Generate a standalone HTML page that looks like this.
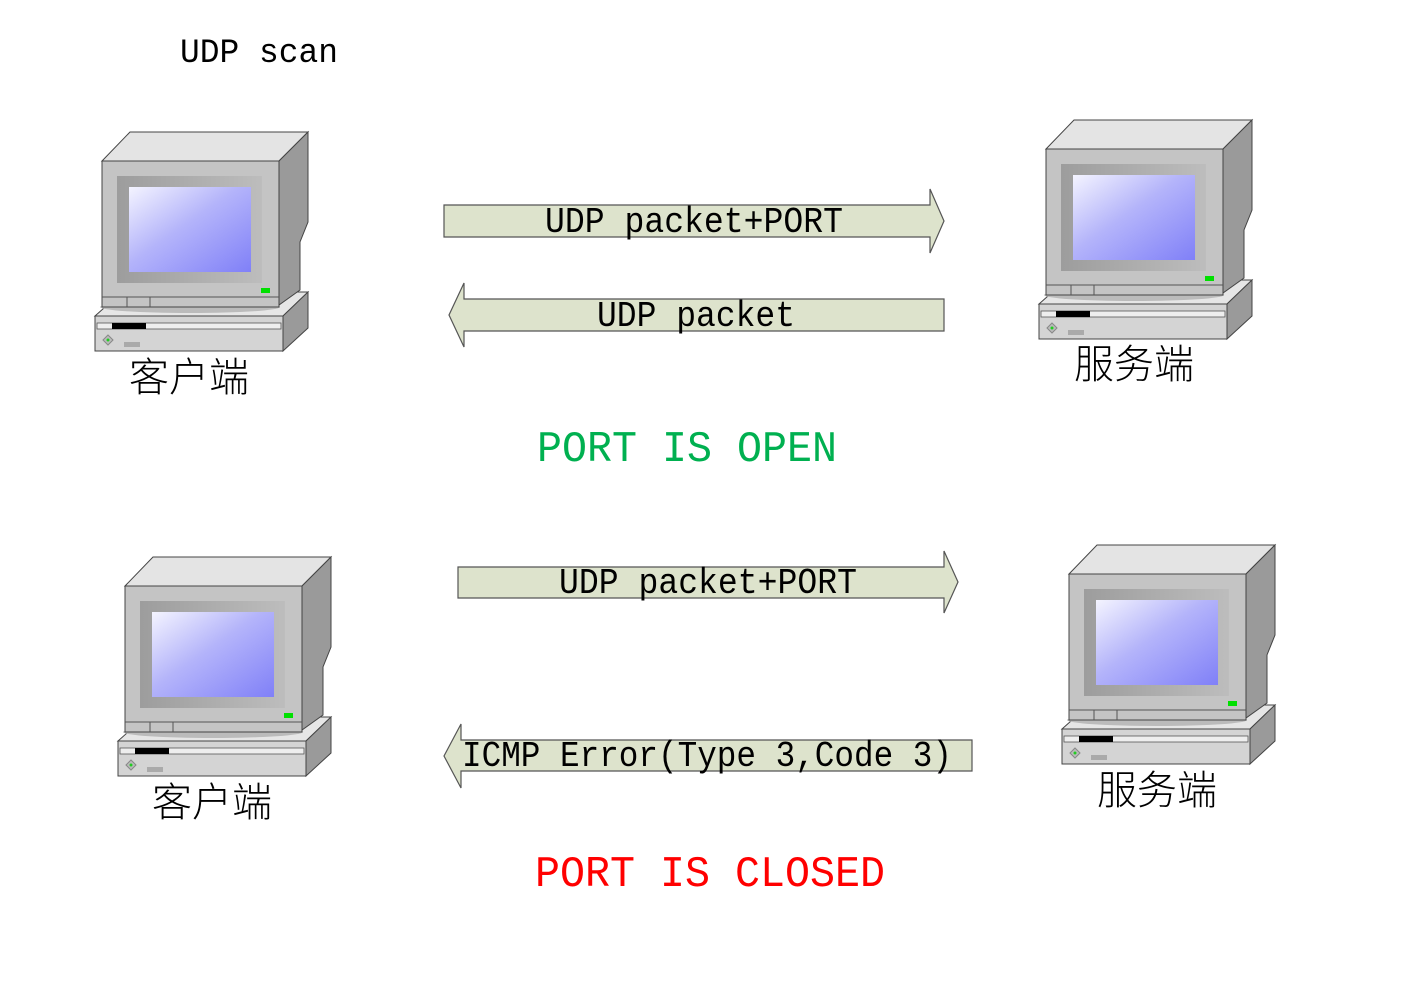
<!DOCTYPE html>
<html><head><meta charset="utf-8"><style>html,body{margin:0;padding:0;background:#fff;}svg{display:block}</style></head>
<body>
<svg width="1403" height="992" viewBox="0 0 1403 992" xmlns="http://www.w3.org/2000/svg">
<defs>
<linearGradient id="scr" x1="0" y1="0" x2="1" y2="1">
<stop offset="0" stop-color="#f4f4ff"/><stop offset="0.45" stop-color="#b4b4fa"/><stop offset="1" stop-color="#8080f8"/></linearGradient>
<linearGradient id="bz" x1="0" y1="0" x2="1" y2="0">
<stop offset="0" stop-color="#a0a0a0"/><stop offset="1" stop-color="#e0e0e0"/></linearGradient>
<g id="pc">
<polygon points="95,316 122,292 308,292 283,316" fill="#e6e6e6" stroke="#444" stroke-width="1"/>
<polygon points="283,316 308,292 308,328 283,351" fill="#9a9a9a" stroke="#444" stroke-width="1"/>
<rect x="95" y="316" width="188" height="35" fill="#d4d4d4" stroke="#444" stroke-width="1"/>
<rect x="97" y="323" width="184" height="6" fill="#eee" stroke="#555" stroke-width="0.8"/>
<rect x="112" y="323" width="34" height="6" fill="#000"/>
<polygon points="108,335 113,340 108,345 103,340" fill="#bbb" stroke="#888"/>
<circle cx="108" cy="340" r="1.5" fill="#2c2"/>
<rect x="124" y="342" width="16" height="5" fill="#aaa"/>
<polygon points="102,161 130,132 308,132 279,161" fill="#e4e4e4" stroke="#444" stroke-width="1"/>
<polygon points="279,161 308,132 308,222 300,242 300,290 279,305" fill="#9a9a9a" stroke="#444" stroke-width="1"/>
<ellipse cx="190" cy="307" rx="90" ry="6" fill="#bbb"/>
<rect x="102" y="161" width="177" height="146" fill="#c4c4c4" stroke="#444" stroke-width="1"/>
<rect x="117" y="176" width="145" height="107" fill="url(#bz)"/>
<rect x="117" y="176" width="145" height="107" fill="#9a9a9a" opacity="0.5"/>
<rect x="129" y="187" width="122" height="85" fill="url(#scr)"/>
<rect x="261" y="288" width="9" height="5" fill="#00e000"/>
<line x1="102" y1="297" x2="279" y2="297" stroke="#555"/>
<line x1="127" y1="297" x2="127" y2="307" stroke="#555"/>
<line x1="150" y1="297" x2="150" y2="307" stroke="#555"/>
</g>
</defs>
<text x="180" y="62" font-family="Liberation Mono, monospace" font-size="34" textLength="158" lengthAdjust="spacingAndGlyphs">UDP scan</text>

<use href="#pc"/>
<use href="#pc" transform="translate(944,-12)"/>
<use href="#pc" transform="translate(23,425)"/>
<use href="#pc" transform="translate(967,413)"/>

<g font-family="Noto Sans CJK SC, sans-serif" font-size="40" font-weight="300">
<text x="129" y="391">客户端</text>
<text x="1074" y="378">服务端</text>
<text x="152" y="816">客户端</text>
<text x="1097" y="804">服务端</text>
</g>

<g fill="#dde3cc" stroke="#555" stroke-width="1.2">
<polygon points="444,205 930,205 930,189 944,221 930,253 930,237 444,237"/>
<polygon points="944,299 464,299 464,283 449,315 464,347 464,331 944,331"/>
<polygon points="458,567 944,567 944,551 958,582 944,613 944,598 458,598"/>
<polygon points="972,740 461,740 461,724 444,756 461,788 461,771 972,771"/>
</g>
<g font-family="Liberation Mono, monospace" font-size="36" fill="#000">
<text x="545" y="232" textLength="298" lengthAdjust="spacingAndGlyphs">UDP packet+PORT</text>
<text x="597" y="326" textLength="198" lengthAdjust="spacingAndGlyphs">UDP packet</text>
<text x="559" y="593" textLength="298" lengthAdjust="spacingAndGlyphs">UDP packet+PORT</text>
<text x="462" y="766" textLength="490" lengthAdjust="spacingAndGlyphs">ICMP Error(Type 3,Code 3)</text>
</g>
<text x="537" y="461" font-family="Liberation Mono, monospace" font-size="44" fill="#00b050" textLength="300" lengthAdjust="spacingAndGlyphs">PORT IS OPEN</text>
<text x="535" y="886" font-family="Liberation Mono, monospace" font-size="44" fill="#ff0000" textLength="350" lengthAdjust="spacingAndGlyphs">PORT IS CLOSED</text>
</svg>
</body></html>
